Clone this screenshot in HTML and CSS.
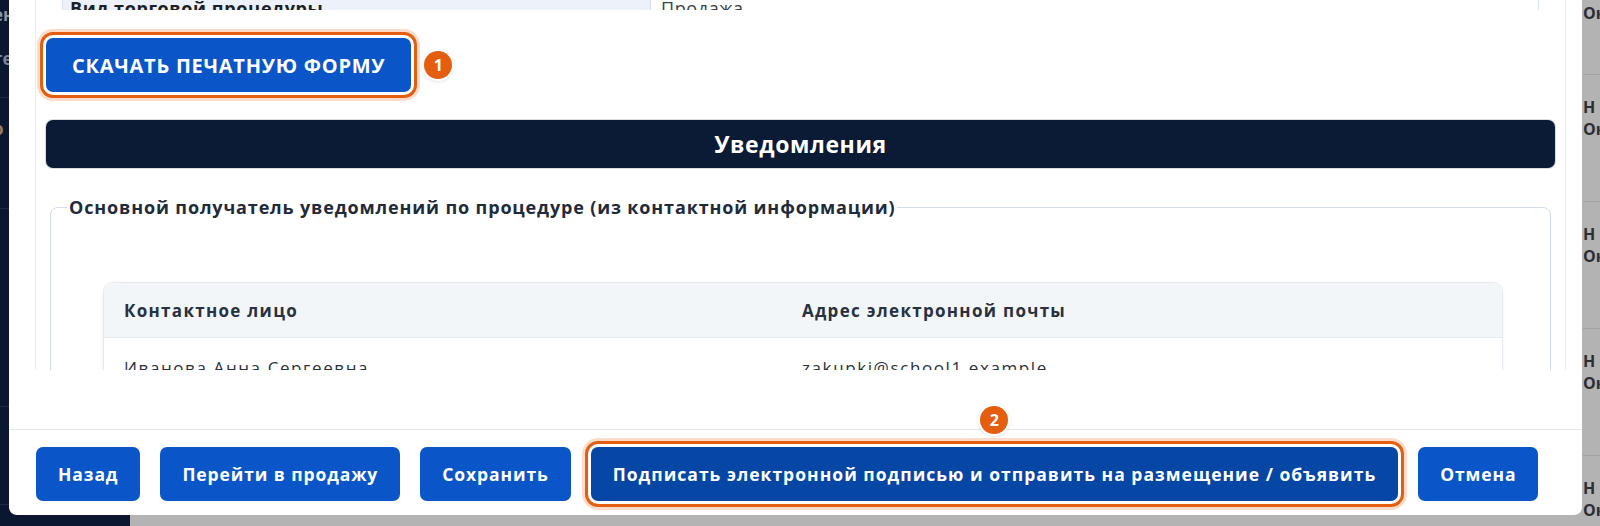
FILE: index.html
```html
<!DOCTYPE html>
<html lang="ru">
<head>
    <meta charset="UTF-8">
    <meta name="viewport" content="width=device-width, initial-scale=1.0">
    <title>Размещение процедуры</title>
    <link rel="stylesheet" href="styles.css">
</head>
<body>
    <div class="page">
        <aside class="side">
            <div class="side-group">
                <div class="side-text side-first">ен</div>
                <div class="side-text side-second">те</div>
            </div>
            <div class="side-group side-active">
                <div class="side-text">о</div>
            </div>
            <div class="side-group side-tall"></div>
            <div class="side-group">
                <div class="side-text side-last">о</div>
            </div>
        </aside>
        <main class="bg-main">
            <div class="bg-col">
                <div class="bg-head">Ок</div>
                <div class="bg-row"><span>Н</span><span>Ок</span></div>
                <div class="bg-row"><span>Н</span><span>Ок</span></div>
                <div class="bg-row"><span>Н</span><span>Ок</span></div>
                <div class="bg-row"><span>Н</span><span>Ок</span></div>
            </div>
        </main>
    </div>

    <div class="modal">
        <div class="modal-body">
            <div class="scroll">
                <div class="info-clip">
                    <div class="info-row">
                        <div class="info-label">Вид торговой процедуры</div>
                        <div class="info-value">Продажа</div>
                    </div>
                </div>

                <div class="print-wrap">
                    <button class="btn btn-print marked">Скачать печатную форму</button>
                    <span class="badge">1</span>
                </div>

                <h2 class="section-title">Уведомления</h2>

                <fieldset class="group">
                    <legend>Основной получатель уведомлений по процедуре (из контактной информации)</legend>
                    <table class="contacts">
                        <thead>
                            <tr>
                                <th class="col-name">Контактное лицо</th>
                                <th>Адрес электронной почты</th>
                            </tr>
                        </thead>
                        <tbody>
                            <tr>
                                <td>Иванова Анна Сергеевна</td>
                                <td>zakupki@school1.example</td>
                            </tr>
                        </tbody>
                    </table>
                </fieldset>
            </div>
        </div>

        <div class="modal-footer">
            <button class="btn">Назад</button>
            <button class="btn">Перейти в продажу</button>
            <button class="btn">Сохранить</button>
            <div class="sign-wrap">
                <button class="btn btn-dark marked">Подписать электронной подписью и отправить на размещение / объявить</button>
                <span class="badge badge-top">2</span>
            </div>
            <button class="btn">Отмена</button>
        </div>
    </div>
</body>
</html>
```

FILE: styles.css
```css
body {
    margin: 0;
    height: 526px;
    overflow: hidden;
    position: relative;
    font-family: 'Open Sans', 'Noto Sans', sans-serif;
    color: #1f2b3a;
}

/* страница под модальным окном (уже затемнена) */
.page {
    display: flex;
    height: 526px;
}

.side {
    width: 130px;
    background: #0b1730;
}

.side-group {
    height: 97px;
    border-bottom: 1px solid #1f2a44;
    overflow: hidden;
}

.side-active {
    height: 110px;
}

.side-tall {
    height: 197px;
}

.side-text {
    white-space: nowrap;
    text-indent: -7px;
    font-size: 17px;
    font-weight: 700;
    line-height: 22px;
    color: #8e96a8;
}

.side-first {
    padding-top: 4px;
}

.side-second {
    margin-top: 22px;
    color: #7b8498;
}

.side-active .side-text {
    padding-top: 20px;
    color: #9c7d63;
}

.side-last {
    padding-top: 96px;
}

.bg-main {
    flex: 1;
    background: #b3b3b3;
    display: flex;
    justify-content: flex-end;
}

.bg-col {
    width: 17px;
    overflow: hidden;
    font-size: 16px;
    font-weight: 700;
    line-height: 22px;
    color: #2b2e34;
    white-space: nowrap;
}

.bg-head {
    height: 74px;
    padding-top: 2px;
    box-sizing: border-box;
}

.bg-row {
    height: 127px;
    box-sizing: border-box;
    border-top: 1px solid #a2a2a2;
    padding-top: 21px;
}

.bg-row span {
    display: block;
}

/* модальное окно */
.modal {
    position: absolute;
    left: 9px;
    top: -10px;
    width: 1573px;
    height: 525px;
    background: #fff;
    border-radius: 8px;
    display: flex;
    flex-direction: column;
}

.modal-body {
    flex: 1;
    min-height: 0;
    display: flex;
    padding: 0 16px 59px 26px;
}

.scroll {
    flex: 1;
    min-width: 0;
    overflow: hidden;
    border-left: 1px solid #e8edf4;
    border-right: 1px solid #e8edf4;
    padding: 10px 10px 0;
}

.info-clip {
    height: 10px;
    overflow: hidden;
    margin: 0 16px;
}

.info-row {
    display: grid;
    grid-template-columns: 588px 1fr;
    margin-top: -8px;
    border-left: 1px solid #dbe3ee;
    border-right: 1px solid #dbe3ee;
    line-height: 24px;
    font-size: 18px;
}

.info-label {
    background: #edf2fa;
    border-right: 1px solid #d3dce8;
    padding: 4px 7px;
    font-weight: 700;
    color: #1c1f26;
    letter-spacing: 0.6px;
}

.info-value {
    padding: 4px 10px;
    color: #3a3f48;
    letter-spacing: 0.6px;
}

.btn {
    height: 54px;
    padding: 0 22px;
    border: none;
    border-radius: 7px;
    background: #0a56c8;
    color: #fff;
    font-family: 'Open Sans', 'Noto Sans', sans-serif;
    font-size: 17.5px;
    font-weight: 700;
    letter-spacing: 0.9px;
    white-space: nowrap;
    cursor: pointer;
}

.btn-dark {
    background: #0646a5;
    letter-spacing: 1.02px;
}

.marked {
    box-shadow: 0 0 0 3px #fff, 0 0 0 6px #e55d0f, 0 0 0 9px #fbdccb;
}

.print-wrap {
    display: flex;
    align-items: center;
    gap: 13px;
    margin-top: 28px;
}

.btn-print {
    padding: 0 26px;
    font-size: 20px;
    letter-spacing: 0.75px;
    text-transform: uppercase;
}

.badge {
    width: 28px;
    height: 28px;
    border-radius: 50%;
    background: #e55d0f;
    color: #fff;
    font-size: 16px;
    font-weight: 700;
    display: flex;
    align-items: center;
    justify-content: center;
    box-shadow: 0 0 0 2px #fff, 0 1px 5px rgba(0, 0, 0, 0.25);
}

.section-title {
    margin: 28px 0 0;
    height: 48px;
    line-height: 48px;
    background: #0b1a35;
    border-radius: 7px;
    box-shadow: 0 0 0 1px rgba(11, 26, 53, 0.15);
    color: #fff;
    text-align: center;
    font-size: 23px;
    font-weight: 700;
    letter-spacing: 0.6px;
}

.group {
    margin: 26px 4px 0;
    padding: 0 16px;
    border: 1px solid #d3dcea;
    border-radius: 8px;
    min-width: 0;
}

.group legend {
    padding: 0 2px;
    line-height: 26px;
    font-size: 18px;
    font-weight: 700;
    letter-spacing: 0.85px;
    color: #1f2b3a;
}

.contacts {
    margin: 62px 31px 0 36px;
    width: calc(100% - 67px);
    border-collapse: separate;
    border-spacing: 0;
    border: 1px solid #e5eaf0;
    border-radius: 10px 10px 0 0;
    box-shadow: 0 1px 4px rgba(30, 50, 80, 0.06);
    font-size: 17px;
    color: #27313f;
}

.contacts th {
    height: 54px;
    padding: 0 20px;
    text-align: left;
    background: #f3f6f9;
    border-bottom: 1px solid #e4e9ef;
    font-weight: 700;
    letter-spacing: 1.3px;
}

.contacts th:first-child {
    border-top-left-radius: 10px;
}

.contacts th:last-child {
    border-top-right-radius: 10px;
}

.contacts .col-name {
    width: 638px;
}

.contacts td {
    padding: 18px 20px;
    line-height: 24px;
    letter-spacing: 1.6px;
}

.modal-footer {
    border-top: 1px solid #e3e8ef;
    padding: 17px 26px 14px 27px;
    display: flex;
    gap: 20px;
}

.sign-wrap {
    position: relative;
    display: flex;
}

.badge-top {
    position: absolute;
    left: 50%;
    top: -41px;
    transform: translateX(-50%);
}
```
